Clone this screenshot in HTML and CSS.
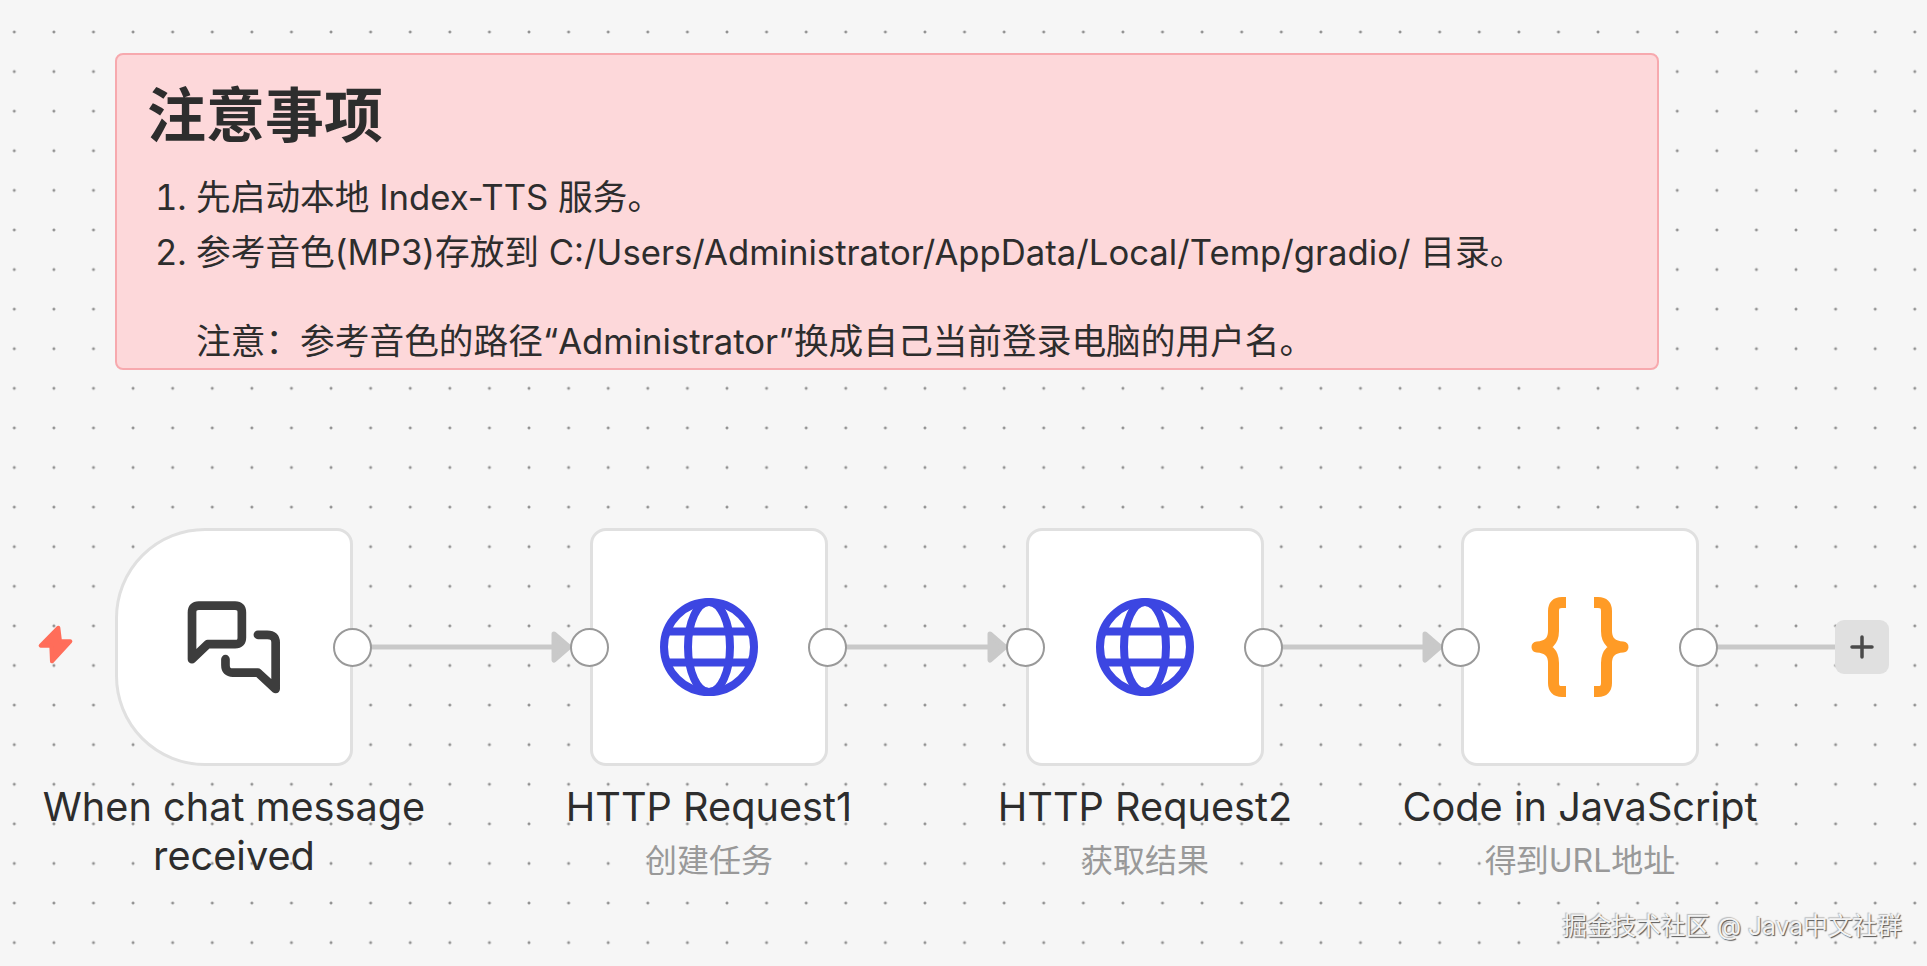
FILE: index.html
```html
<!DOCTYPE html>
<html lang="zh-CN">
<head>
<meta charset="utf-8">
<title>n8n workflow</title>
<link rel="stylesheet" href="styles.css">
</head>
<body>
<main class="canvas">
  <section class="sticky">
    <h1>注意事项</h1>
    <ol>
      <li>先启动本地 Index-TTS 服务。</li>
      <li>参考音色(MP3)存放到 C:/Users/Administrator/AppData/Local/Temp/gradio/ 目录。
        <p>注意：参考音色的路径“Administrator”换成自己当前登录电脑的用户名。</p>
      </li>
    </ol>
  </section>

  <svg class="edges" width="1927" height="966" viewBox="0 0 1927 966">
    <g class="edge-line">
      <path d="M370 647H555"/>
      <path d="M845 647H1030"/>
      <path d="M1280 647H1465"/>
      <path d="M1716 647H1836"/>
    </g>
    <g class="edge-arrow">
      <path d="M554 634L569 647L554 660Z"/>
      <path d="M990 634L1005 647L990 660Z"/>
      <path d="M1425 634L1440 647L1425 660Z"/>
    </g>
  </svg>

  <svg class="bolt" viewBox="0 0 150 180" width="50" height="60">
    <path d="M85 38L32 92H64L66 139L121 79H90Z"/>
  </svg>

  <article class="node node-chat">
    <div class="box box-trigger">
      <svg class="icon" viewBox="44 28 296 290" width="99" height="97">
        <g class="chat-stroke">
          <path d="M65 208V68Q65 48 85 48H194Q214 48 214 68V143Q214 163 194 163H112L65 208Z"/>
          <path d="M165 208V226Q165 248 187 248H262L315 297V158Q315 135 290 135H262"/>
        </g>
      </svg>
      <span class="port port-out"></span>
    </div>
    <h2 class="label">When chat message received</h2>
  </article>

  <article class="node node-http1">
    <div class="box">
      <span class="port port-in"></span>
      <svg class="icon" viewBox="0 0 100 100" width="100" height="100">
        <g class="globe-stroke">
          <circle cx="50" cy="50" r="45"/>
          <ellipse cx="50" cy="50" rx="21" ry="45"/>
          <path d="M9 34.500H91M9 65.500H91"/>
        </g>
      </svg>
      <span class="port port-out"></span>
    </div>
    <h2 class="label">HTTP Request1</h2>
    <p class="sub">创建任务</p>
  </article>

  <article class="node node-http2">
    <div class="box">
      <span class="port port-in"></span>
      <svg class="icon" viewBox="0 0 100 100" width="100" height="100">
        <g class="globe-stroke">
          <circle cx="50" cy="50" r="45"/>
          <ellipse cx="50" cy="50" rx="21" ry="45"/>
          <path d="M9 34.500H91M9 65.500H91"/>
        </g>
      </svg>
      <span class="port port-out"></span>
    </div>
    <h2 class="label">HTTP Request2</h2>
    <p class="sub">获取结果</p>
  </article>

  <article class="node node-code">
    <div class="box">
      <span class="port port-in"></span>
      <svg class="icon" viewBox="0 0 100 102" width="100" height="102">
        <g class="brace-stroke">
          <path d="M36 6.500H32Q23.500 6.500 23.500 15V35Q23.500 50 7 51Q23.500 52 23.500 67V87Q23.500 95.500 32 95.500H36"/>
          <path d="M64 6.500H68Q76.500 6.500 76.500 15V35Q76.500 50 93 51Q76.500 52 76.500 67V87Q76.500 95.500 68 95.500H64"/>
        </g>
      </svg>
      <span class="port port-out"></span>
    </div>
    <h2 class="label">Code in JavaScript</h2>
    <p class="sub">得到URL地址</p>
  </article>

  <button class="add" type="button" aria-label="add">
    <svg viewBox="0 0 24 24" width="24" height="24"><path d="M12 2V22M2 12H22"/></svg>
  </button>

  <div class="watermark">掘金技术社区 @ Java中文社群</div>
</main>
</body>
</html>
```
FILE: styles.css
```css
* { box-sizing: border-box; }
html, body { margin: 0; padding: 0; }
body {
  background: #f6f6f6;
  color: #2d2d2d;
  font-family: Inter, "Noto Sans CJK SC", sans-serif;
  overflow: hidden;
}
.canvas {
  position: relative;
  width: 1927px;
  height: 966px;
  overflow: hidden;
  background-color: #f6f6f6;
  background-image: radial-gradient(circle at center, #909090 0, #909090 1.1px, transparent 1.8px);
  background-size: 39.6px 39.6px;
  background-position: -5.5px 12.2px;
}
.sticky {
  position: absolute;
  left: 115px;
  top: 53px;
  width: 1544px;
  height: 317px;
  padding: 26px 30px 0;
  overflow: hidden;
  background: #fdd8da;
  border: 2px solid #f7a9ae;
  border-radius: 8px;
}
.sticky h1 {
  margin: 0 0 19px;
  font-size: 59px;
  line-height: 70px;
  font-weight: 700;
}
.sticky ol {
  margin: 0;
  padding: 0 0 0 49px;
  font-size: 34.700px;
  line-height: 54.500px;
}
.sticky p { margin: 35px 0 0; }
.edges { position: absolute; left: 0; top: 0; }
.edge-line path { fill: none; stroke: #c9c9c9; stroke-width: 5; }
.edge-arrow path { fill: #c9c9c9; stroke: #c9c9c9; stroke-width: 5; stroke-linejoin: round; }
.bolt { position: absolute; left: 30px; top: 615px; }
.bolt path { fill: #ff6d5a; stroke: #ff6d5a; stroke-width: 12; stroke-linejoin: round; }
.node {
  position: absolute;
  top: 528px;
  width: 238px;
  display: flex;
  flex-direction: column;
  align-items: center;
}
.node-chat { left: 115px; }
.node-http1 { left: 590px; }
.node-http2 { left: 1026px; }
.node-code { left: 1461px; }
.box {
  position: relative;
  width: 238px;
  height: 238px;
  flex: none;
  display: flex;
  align-items: center;
  justify-content: center;
  background: #fff;
  border: 3px solid #e0e0e0;
  border-radius: 16px;
}
.box-trigger { border-radius: 90px 16px 16px 90px; }
.port {
  position: absolute;
  top: 97px;
  width: 39px;
  height: 39px;
  background: #fff;
  border: 2px solid #999;
  border-radius: 50%;
}
.port-in { left: -23px; }
.port-out { right: -21.500px; }
.icon { display: block; }
.chat-stroke path { fill: none; stroke: #3d3d3d; stroke-width: 26; stroke-linecap: round; stroke-linejoin: round; }
.globe-stroke circle, .globe-stroke ellipse, .globe-stroke path { fill: none; stroke: #3c46e2; stroke-width: 8; }
.brace-stroke path { fill: none; stroke: #ff9b26; stroke-width: 11; stroke-linejoin: round; }
.label {
  flex: none;
  width: 420px;
  margin: 17px 0 0;
  font-size: 39.700px;
  line-height: 49px;
  font-weight: 400;
  text-align: center;
  color: #2d2d2d;
}
.sub {
  flex: none;
  width: 420px;
  margin: 4px 0 0;
  font-size: 32px;
  line-height: 49px;
  text-align: center;
  color: #999;
}
.add {
  position: absolute;
  left: 1835px;
  top: 620px;
  width: 54px;
  height: 54px;
  padding: 0;
  display: flex;
  align-items: center;
  justify-content: center;
  background: #e0e0e0;
  border: 0;
  border-radius: 9px;
}
.add path { fill: none; stroke: #4a4a4a; stroke-width: 3.500; stroke-linecap: round; }
.watermark {
  position: absolute;
  right: 25px;
  top: 909px;
  font-size: 24.700px;
  line-height: 34px;
  color: #f3f3f3;
  text-shadow: 1px 1px 1px #555, -1px -1px 1px #bbb;
  white-space: nowrap;
}
```
